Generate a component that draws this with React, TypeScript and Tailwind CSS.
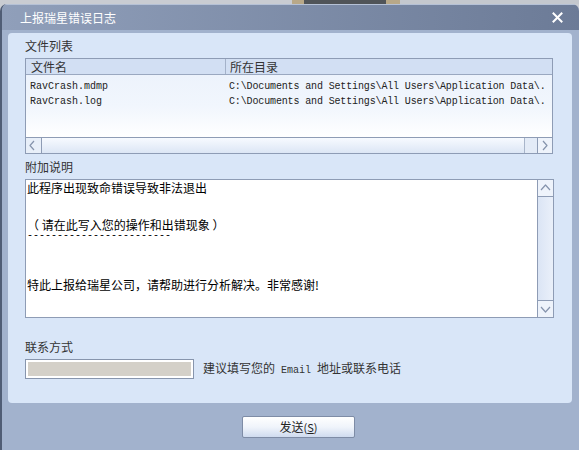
import React from "react";

const cjk = "font-['Noto_Sans_CJK_SC','Noto_Sans_CJK_JP',sans-serif]";
const mono = "font-['Liberation_Mono','Noto_Sans_CJK_SC',monospace]";

function Tri({ dir }: { dir: "l" | "r" | "u" | "d" }) {
  const pts =
    dir === "l"
      ? "7,2 3,6.5 7,11"
      : dir === "r"
      ? "4,2 8,6.5 4,11"
      : dir === "u"
      ? "2,8 6.5,3 11,8"
      : "2,4 6.5,9 11,4";
  return (
    <svg width="13" height="13" viewBox="0 0 13 13">
      <polyline points={pts} fill="none" stroke="#8694ad" strokeWidth="1.2" strokeLinejoin="round" />
    </svg>
  );
}

export default function App() {
  return (
    <div className={`w-[579px] h-[450px] overflow-hidden bg-[#c9ccd2] flex flex-col ${cjk}`}>
      {/* strip behind window */}
      <div className="h-[4px] flex shrink-0">
        <div className="w-[292px] bg-[#c9ccd2]" />
        <div className="w-[12px] bg-[#b8a888]" />
        <div className="w-[82px] bg-[#505458]" />
        <div className="w-[14px] bg-[#b8a888]" />
        <div className="flex-1 bg-[#c4c8ce]" />
      </div>
      {/* window */}
      <div className="flex-1 flex flex-col bg-[#a2b2cd] rounded-t-[7px] border-l-[2px] border-[#505d75] overflow-hidden">
        {/* title bar */}
        <div className="h-[26px] shrink-0 flex items-center justify-between pl-[18px] pr-[16px] bg-gradient-to-r from-[#909fba] to-[#6c7b97] border-t border-[#b5c1d6]">
          <span className="text-[12px] leading-[12px] text-white">上报瑞星错误日志</span>
          <svg width="11" height="11" viewBox="0 0 11 11">
            <path d="M1.5 1.5 L9.5 9.5 M9.5 1.5 L1.5 9.5" stroke="#ffffff" strokeWidth="2" strokeLinecap="square" />
          </svg>
        </div>
        <div className="h-[3px] shrink-0" />
        {/* body panel */}
        <div className="ml-[6px] mr-[7px] h-[370px] shrink-0 rounded-[4px] bg-[#d9e6f8] flex flex-col pl-[17px] pr-[17px] text-[12px] leading-[12px] text-[#333]">
          <div className="mt-[7px] h-[12px]">文件列表</div>
          {/* list box */}
          <div className="mt-[6px] w-[528px] h-[96px] border border-[#8e9cb5] bg-white flex flex-col">
            <div className="h-[16px] flex bg-[#d2dff3] border-b border-[#9aa8c0] text-[#333]">
              <div className="w-[200px] pl-[5px] border-r border-[#a4b2c9] flex items-center">文件名</div>
              <div className="flex-1 pl-[4px] flex items-center">所在目录</div>
            </div>
            <div className={`flex-1 bg-gradient-to-b from-[#edf3fc] via-[#f1f6fd] to-white text-[10px] leading-[15px] text-[#222] pt-[4px] ${mono}`}>
              <div className="flex h-[15px] whitespace-nowrap">
                <div className="w-[200px] pl-[4px]">RavCrash.mdmp</div>
                <div className="flex-1 pl-[3px] tracking-[-0.14px]">C:\Documents and Settings\All Users\Application Data\.</div>
              </div>
              <div className="flex h-[15px] whitespace-nowrap">
                <div className="w-[200px] pl-[4px]">RavCrash.log</div>
                <div className="flex-1 pl-[3px] tracking-[-0.14px]">C:\Documents and Settings\All Users\Application Data\.</div>
              </div>
            </div>
            {/* h scrollbar */}
            <div className="h-[16px] flex bg-[#e3ebf7] border-t border-[#8e9cb5]">
              <div className="w-[16px] border-r border-[#8e9cb5] bg-[#e8eff9] flex items-center justify-center">
                <Tri dir="l" />
              </div>
              <div className="w-[483px] border-r border-[#a8b5ca] bg-gradient-to-b from-[#f7faff] to-[#dce6f5]" />
              <div className="flex-1" />
              <div className="w-[15px] border-l border-[#8e9cb5] bg-[#eef3fb] flex items-center justify-center">
                <Tri dir="r" />
              </div>
            </div>
          </div>
          <div className="mt-[7px] h-[12px]">附加说明</div>
          {/* textarea */}
          <div className="mt-[6px] w-[529px] h-[139px] border border-[#8e9cb5] bg-white flex text-black">
            <div className="flex-1 pl-[1px] pt-[2px] leading-[12px] whitespace-pre">
              <div className="h-[12px]">此程序出现致命错误导致非法退出</div>
              <div className="h-[12px]" />
              <div className="h-[12px]" />
              <div className="h-[12px] mt-[1px]">（ 请在此写入您的操作和出错现象 ）</div>
              <div className={`h-[12px] ${mono} text-[10px] leading-[10px]`}>------------------------</div>
              <div className="h-[12px]" />
              <div className="h-[12px]" />
              <div className="h-[12px]" />
              <div className="h-[12px]">特此上报给瑞星公司，请帮助进行分析解决。非常感谢!</div>
            </div>
            <div className="w-[16px] border-l border-[#8e9cb5] bg-gradient-to-r from-[#dbe5f5] to-[#eaf0fa] flex flex-col">
              <div className="h-[17px] border-b border-[#8e9cb5] bg-[#eef3fb] flex items-center justify-center">
                <Tri dir="u" />
              </div>
              <div className="flex-1" />
              <div className="h-[17px] border-t border-[#8e9cb5] bg-[#eef3fb] flex items-center justify-center">
                <Tri dir="d" />
              </div>
            </div>
          </div>
          <div className="mt-[23px] h-[12px]">联系方式</div>
          <div className="mt-[6px] flex items-center">
            <div className="w-[169px] h-[20px] border border-[#8795ad] bg-white p-[2px]">
              <div className="w-full h-full bg-[#d4d0c8]" />
            </div>
            <div className="ml-[9px] text-[#333] whitespace-pre">
              建议填写您的<span className={`${mono} text-[10px]`}> Email </span>地址或联系电话
            </div>
          </div>
        </div>
        {/* bottom */}
        <div className="flex-1 flex justify-start pt-[13px] pl-[240px]">
          <div className="w-[113px] h-[22px] border border-[#7e8ca6] rounded-[2px] bg-gradient-to-b from-white via-[#f0f4fb] to-[#cfdbef] flex items-center justify-center text-[12px] leading-[12px] text-[#222]">
            发送<span className="text-[11px]">(<span className="underline">S</span>)</span>
          </div>
        </div>
      </div>
    </div>
  );
}
